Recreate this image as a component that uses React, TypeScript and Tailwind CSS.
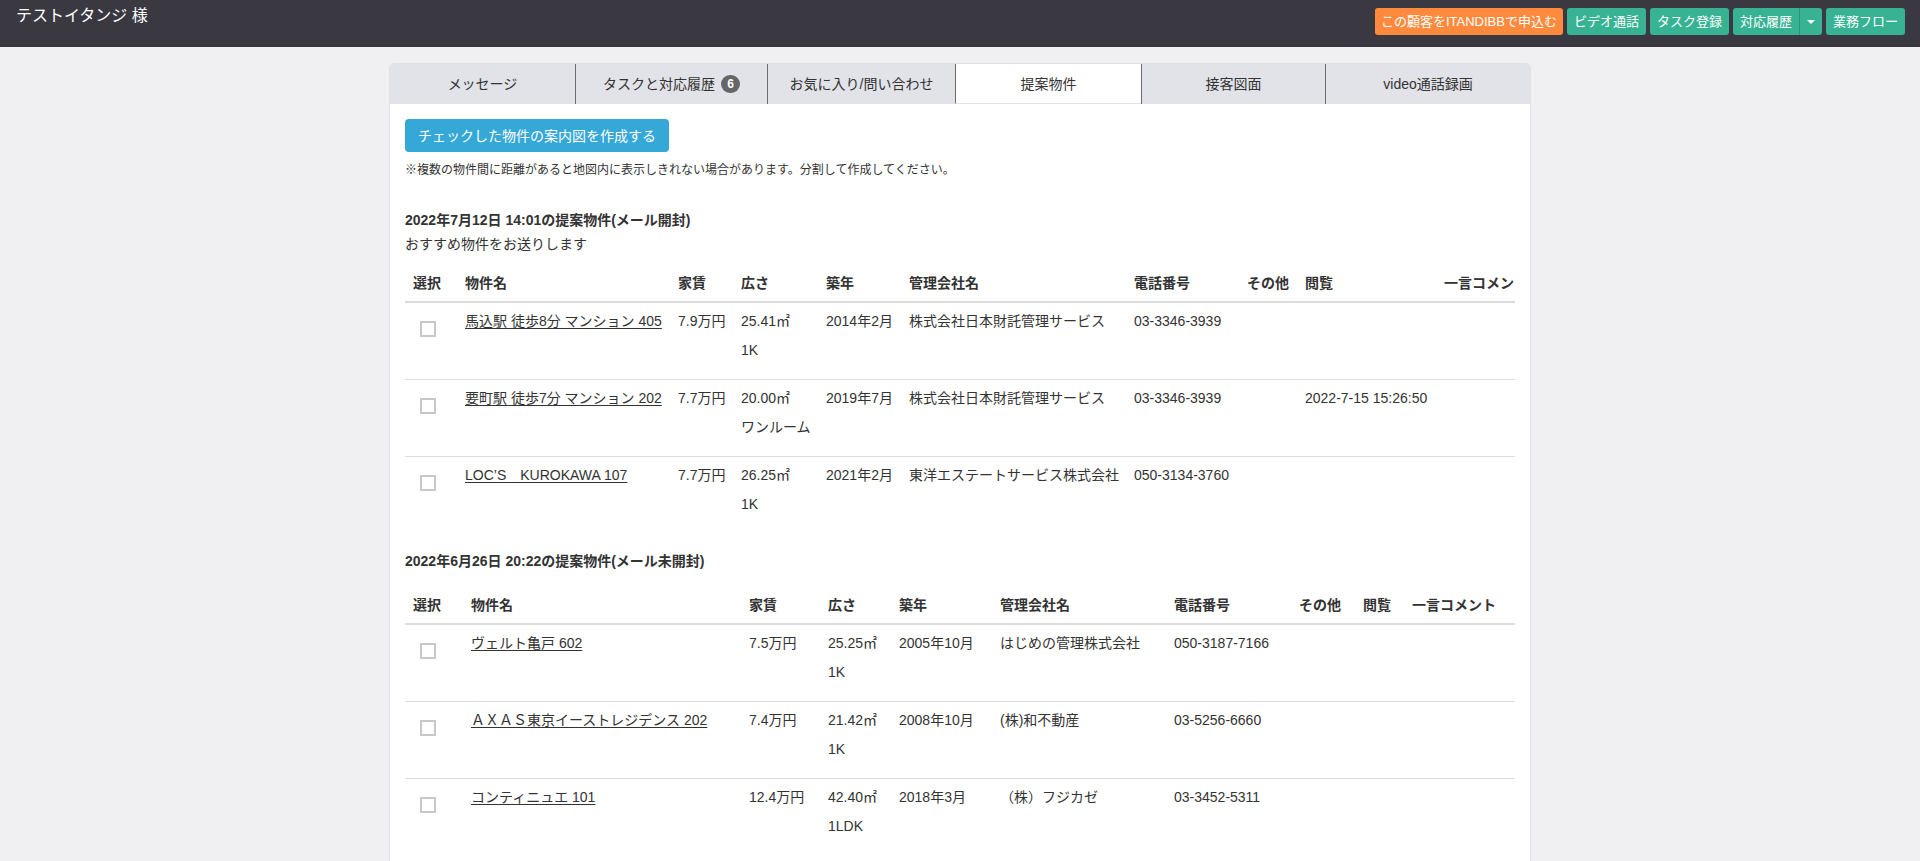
import React from "react";

type Row = {
  name: string;
  rent: string;
  area: string;
  layout: string;
  built: string;
  company: string;
  tel: string;
  other?: string;
  viewed?: string;
  comment?: string;
};

type Proposal = {
  title: string;
  note?: string;
  tableWidth: string;
  widths: string[];
  rows: Row[];
};

const HEADERS = ["選択", "物件名", "家賃", "広さ", "築年", "管理会社名", "電話番号", "その他", "閲覧", "一言コメント"];

const proposals: Proposal[] = [
  {
    title: "2022年7月12日 14:01の提案物件(メール開封)",
    note: "おすすめ物件をお送りします",
    tableWidth: "w-[1141px]",
    widths: ["w-[52px]", "w-[213px]", "w-[63px]", "w-[85px]", "w-[83px]", "w-[225px]", "w-[113px]", "w-[58px]", "w-[139px]", "w-[110px]"],
    rows: [
      {
        name: "馬込駅 徒歩8分 マンション 405",
        rent: "7.9万円",
        area: "25.41㎡",
        layout: "1K",
        built: "2014年2月",
        company: "株式会社日本財託管理サービス",
        tel: "03-3346-3939",
      },
      {
        name: "要町駅 徒歩7分 マンション 202",
        rent: "7.7万円",
        area: "20.00㎡",
        layout: "ワンルーム",
        built: "2019年7月",
        company: "株式会社日本財託管理サービス",
        tel: "03-3346-3939",
        viewed: "2022-7-15 15:26:50",
      },
      {
        name: "LOC’S　KUROKAWA 107",
        rent: "7.7万円",
        area: "26.25㎡",
        layout: "1K",
        built: "2021年2月",
        company: "東洋エステートサービス株式会社",
        tel: "050-3134-3760",
      },
    ],
  },
  {
    title: "2022年6月26日 20:22の提案物件(メール未開封)",
    tableWidth: "w-[1110px]",
    widths: ["w-[58px]", "w-[278px]", "w-[79px]", "w-[71px]", "w-[101px]", "w-[174px]", "w-[125px]", "w-[64px]", "w-[49px]", "w-[111px]"],
    rows: [
      {
        name: "ヴェルト亀戸 602",
        rent: "7.5万円",
        area: "25.25㎡",
        layout: "1K",
        built: "2005年10月",
        company: "はじめの管理株式会社",
        tel: "050-3187-7166",
      },
      {
        name: "ＡＸＡＳ東京イーストレジデンス 202",
        rent: "7.4万円",
        area: "21.42㎡",
        layout: "1K",
        built: "2008年10月",
        company: "(株)和不動産",
        tel: "03-5256-6660",
      },
      {
        name: "コンティニュエ 101",
        rent: "12.4万円",
        area: "42.40㎡",
        layout: "1LDK",
        built: "2018年3月",
        company: "（株）フジカゼ",
        tel: "03-3452-5311",
      },
    ],
  },
];

const tabs = [
  { label: "メッセージ", w: "w-[185px]" },
  { label: "タスクと対応履歴", w: "w-[192px]", badge: "6" },
  { label: "お気に入り/問い合わせ", w: "w-[188px]" },
  { label: "提案物件", w: "w-[186px]", active: true },
  { label: "接客図面", w: "w-[184px]" },
  { label: "video通話録画", w: "flex-1" },
];

function TopBar() {
  return (
    <header className="flex h-[47px] items-start justify-between bg-[#3a3841]">
      <h1 className="pl-4 pt-[6px] text-base leading-5 text-white">テストイタンジ 様</h1>
      <div className="flex gap-1 pr-[15px] pt-2 text-[13px] text-white">
        <button type="button" className="h-[27px] rounded-[3px] bg-[#ff8a3e] px-[6px] leading-[27px]">
          この顧客をITANDIBBで申込む
        </button>
        <button type="button" className="h-[27px] rounded-[3px] bg-[#37b393] px-[7px] leading-[27px]">
          ビデオ通話
        </button>
        <button type="button" className="h-[27px] rounded-[3px] bg-[#37b393] px-[7px] leading-[27px]">
          タスク登録
        </button>
        <div className="flex h-[27px] rounded-[3px] bg-[#37b393]">
          <button type="button" className="border-r border-[#2c9479] px-[7px] leading-[27px]">
            対応履歴
          </button>
          <button type="button" className="flex w-[22px] items-center justify-center" aria-label="履歴メニュー">
            <span className="h-0 w-0 border-x-[4px] border-t-[4px] border-x-transparent border-t-white" />
          </button>
        </div>
        <button type="button" className="h-[27px] rounded-[3px] bg-[#37b393] px-[7px] leading-[27px]">
          業務フロー
        </button>
      </div>
    </header>
  );
}

function Tabs() {
  return (
    <div className="flex h-10 bg-[#e1e3e8] text-sm text-[#333]">
      {tabs.map((t, i) => (
        <div
          key={t.label}
          className={`${t.w} flex items-center justify-center gap-[6px] ${i > 0 ? "border-l border-[#6b6b6b]" : ""} ${
            t.active ? "border-b border-b-[#e1e3e8] bg-white" : ""
          }`}
        >
          <span>{t.label}</span>
          {t.badge && (
            <span className="flex h-[18px] w-[19px] items-center justify-center rounded-full bg-[#666] text-xs font-bold text-white">
              {t.badge}
            </span>
          )}
        </div>
      ))}
    </div>
  );
}

function ProposalTable({ p, first }: { p: Proposal; first: boolean }) {
  return (
    <section className={first ? "mt-[31px]" : "mt-[18px]"}>
      <h2 className="text-sm font-bold leading-5">{p.title}</h2>
      {p.note && <p className="mt-1 text-sm leading-5">{p.note}</p>}
      {/* wide tables are clipped at the panel's inner edge */}
      <div className={`${p.note ? "mt-[11px]" : "mt-[16px]"} w-[1110px] overflow-hidden`}>
        <table className={`${p.tableWidth} table-fixed border-collapse text-left text-sm leading-5`}>
          <thead>
            <tr className="border-b-2 border-[#ddd]">
              {HEADERS.map((h, i) => (
                <th key={h} className={`${p.widths[i]} whitespace-nowrap px-2 py-2 font-bold`}>
                  {h}
                </th>
              ))}
            </tr>
          </thead>
          <tbody>
            {p.rows.map((r, i) => (
              <tr key={r.name} className={i < p.rows.length - 1 ? "border-b border-[#ddd]" : ""}>
                <td className="px-2 pb-[19px] pt-2 align-top">
                  <span className="ml-[7px] mt-[10px] block h-4 w-4 border-2 border-[#c8c8c8] bg-white" />
                </td>
                <td className="px-2 pb-[19px] pt-2 align-top whitespace-nowrap">
                  <a href="#" className="underline underline-offset-2">
                    {r.name}
                  </a>
                </td>
                <td className="px-2 pb-[19px] pt-2 align-top whitespace-nowrap">{r.rent}</td>
                <td className="px-2 pb-[19px] pt-2 align-top whitespace-nowrap">
                  <div className="flex flex-col gap-[9px]">
                    <span>{r.area}</span>
                    <span>{r.layout}</span>
                  </div>
                </td>
                <td className="px-2 pb-[19px] pt-2 align-top whitespace-nowrap">{r.built}</td>
                <td className="px-2 pb-[19px] pt-2 align-top whitespace-nowrap">{r.company}</td>
                <td className="px-2 pb-[19px] pt-2 align-top whitespace-nowrap">{r.tel}</td>
                <td className="px-2 pb-[19px] pt-2 align-top">{r.other}</td>
                <td className="px-2 pb-[19px] pt-2 align-top whitespace-nowrap">{r.viewed}</td>
                <td className="px-2 pb-[19px] pt-2 align-top">{r.comment}</td>
              </tr>
            ))}
          </tbody>
        </table>
      </div>
    </section>
  );
}

export default function App() {
  return (
    <div className="min-h-screen bg-[#f0f0f2] font-['Liberation_Sans','Noto_Sans_CJK_JP',sans-serif] text-[#333]">
      <TopBar />
      <main className="mx-auto mt-4 w-[1142px] overflow-hidden rounded-t-[5px] border border-[#e0e0e4] bg-white">
        <Tabs />
        <div className="px-[15px] pb-10 pt-[15px]">
          <button type="button" className="h-[33px] rounded-[4px] bg-[#36a8d7] px-[13px] text-sm text-white">
            チェックした物件の案内図を作成する
          </button>
          <p className="mt-[10px] text-xs leading-[17px]">
            ※複数の物件間に距離があると地図内に表示しきれない場合があります。分割して作成してください。
          </p>
          {proposals.map((p, i) => (
            <ProposalTable key={p.title} p={p} first={i === 0} />
          ))}
        </div>
      </main>
    </div>
  );
}
